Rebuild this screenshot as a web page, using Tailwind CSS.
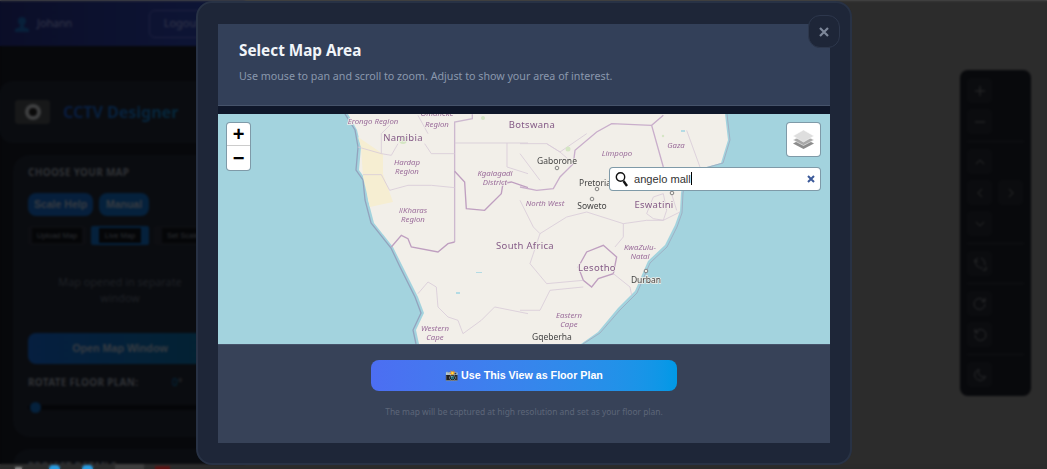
<!DOCTYPE html>
<html lang="en">
<head>
    <meta charset="UTF-8">
    <meta name="viewport" content="width=device-width, initial-scale=1.0">
    <title>CCTV Designer</title>
    <script src="https://cdn.jsdelivr.net/npm/@tailwindcss/browser@4"></script>
</head>
<body class="relative h-[469px] w-[1047px] overflow-hidden bg-[#2c2c2c] font-['Noto_Sans',sans-serif]">

    <!-- Page behind the modal -->
    <div class="flex h-full flex-col border-t border-[#4a4a4a]">
        <div class="flex min-h-0 flex-1 justify-between">
            <!-- Sidebar -->
            <aside class="flex h-[463px] w-[245px] flex-col overflow-hidden bg-[#07080b]">
                <div class="flex h-[45px] shrink-0 items-center bg-gradient-to-r from-[#0b0e28] to-[#0e1638] pl-[15px]">
                    <svg class="h-[16px] w-[14px]" viewBox="0 0 14 16" fill="#08203a"><circle cx="7" cy="5" r="4"/><path d="M5 8h4v3l5 2v3H0v-3l5-2z"/></svg>
                    <span class="ml-[8px] w-[35px] text-[10.7px] text-[#33364a]">Johann</span>
                    <div class="ml-[77px] flex h-[28px] w-[66px] items-center justify-center rounded-md border border-[#1e2140] text-[11px] text-[#33364a]">Logout</div>
                </div>

                <div class="mt-[35px] flex h-[62px] shrink-0 items-center rounded-xl bg-[#0a0c10] pl-[15px]">
                    <div class="flex h-[24px] w-[35px] items-center justify-center rounded-[3px] bg-[#171819]">
                        <div class="flex h-[16px] w-[16px] items-center justify-center rounded-full bg-[#3e3f40]">
                            <div class="h-[8px] w-[8px] rounded-full bg-[#0a0a0a]"></div>
                        </div>
                    </div>
                    <h1 class="ml-[13px] bg-gradient-to-r from-[#091c40] to-[#05283c] bg-clip-text text-[16px] font-bold text-transparent">CCTV Designer</h1>
                </div>

                <section class="mt-[12px] ml-[13px] h-[282px] w-[214px] shrink-0 rounded-2xl bg-[#0a0c10] px-[15px] pt-[10px]">
                    <h2 class="text-[10px] font-bold tracking-[0.3px] text-[#303236]">CHOOSE YOUR MAP</h2>
                    <div class="mt-[13px] flex gap-[6px] font-['Liberation_Sans',sans-serif] text-[10.5px] font-bold text-[#383c42]">
                        <div class="flex h-[23px] w-[65px] items-center justify-center rounded-lg bg-[#061f3c]">Scale Help</div>
                        <div class="flex h-[23px] w-[50px] items-center justify-center rounded-lg bg-[#05213c]">Manual</div>
                    </div>
                    <div class="mt-[10px] flex gap-[5px] font-['Liberation_Sans',sans-serif] text-[7.5px] text-[#2d3034]">
                        <div class="flex h-[19px] w-[58px] items-center justify-center rounded-[2px] bg-[#0d0e12]"><span class="bg-[#050608] px-[5px] py-[2px]">Upload Map</span></div>
                        <div class="flex h-[19px] w-[58px] items-center justify-center rounded-[2px] bg-[#05213c]"><span class="bg-[#050608] px-[6px] py-[2px]">Live Map</span></div>
                        <div class="flex h-[19px] w-[58px] items-center justify-center rounded-[2px] bg-[#0d0e12]"><span class="bg-[#050608] px-[5px] py-[2px]">Set Scale</span></div>
                    </div>
                    <p class="mt-[29px] text-center text-[10.8px] leading-[16px] text-[#1f2126]">Map opened in separate<br>window</p>
                    <div class="mt-[27px] flex h-[31px] w-[184px] items-center justify-center rounded-lg bg-gradient-to-r from-[#061f40] to-[#032232] font-['Liberation_Sans',sans-serif] text-[10.7px] font-bold text-[#383c42]">Open Map Window</div>
                    <div class="mt-[11px] flex items-center text-[10px] font-bold tracking-[0.3px] whitespace-nowrap text-[#303236]">
                        <span class="w-[109px]">ROTATE FLOOR PLAN:</span>
                        <span class="ml-[35px] font-normal text-[#04283e]">0<span class="text-[#303236]">°</span></span>
                    </div>
                    <div class="relative mt-[15px] h-[5px] w-[184px] rounded bg-[#050608]">
                        <div class="absolute top-[-3px] left-[2px] h-[11px] w-[11px] rounded-full bg-[#05213c]"></div>
                    </div>
                </section>

                <section class="mt-[12px] ml-[13px] h-[40px] w-[214px] shrink-0 rounded-2xl bg-[#0a0c10] px-[15px] pt-[10px]">
                    <h2 class="text-[10px] font-bold tracking-[0.3px] text-[#303236]">PROJECT DETAILS</h2>
                </section>
            </aside>

            <!-- Canvas toolbar -->
            <div class="mt-[69px] mr-[16px] flex h-[326px] w-[71px] flex-col items-start rounded-lg bg-[#08090c] px-[7px] pt-[8px] text-[#2a2b2d]">
                <button class="flex h-[25px] w-[25px] items-center justify-center rounded bg-[#0b0c0f]"><svg class="h-[12px] w-[12px]" viewBox="0 0 12 12" fill="none" stroke="currentColor"><path d="M6 1v10M1 6h10"/></svg></button>
                <button class="mt-[6px] flex h-[25px] w-[25px] items-center justify-center rounded bg-[#0b0c0f]"><svg class="h-[12px] w-[12px]" viewBox="0 0 12 12" fill="none" stroke="currentColor"><path d="M1 6h10"/></svg></button>
                <div class="my-[7px] h-px w-[57px] bg-[#101114]"></div>
                <button class="flex h-[25px] w-[25px] items-center justify-center rounded bg-[#0b0c0f]"><svg class="h-[12px] w-[12px]" viewBox="0 0 12 12" fill="none" stroke="currentColor"><path d="M2 8l4-4 4 4"/></svg></button>
                <div class="mt-[6px] flex gap-[6px]">
                    <button class="flex h-[25px] w-[25px] items-center justify-center rounded bg-[#0b0c0f]"><svg class="h-[12px] w-[12px]" viewBox="0 0 12 12" fill="none" stroke="currentColor"><path d="M8 2L4 6l4 4"/></svg></button>
                    <button class="flex h-[25px] w-[25px] items-center justify-center rounded bg-[#0b0c0f]"><svg class="h-[12px] w-[12px]" viewBox="0 0 12 12" fill="none" stroke="currentColor"><path d="M4 2l4 4-4 4"/></svg></button>
                </div>
                <button class="mt-[6px] flex h-[25px] w-[25px] items-center justify-center rounded bg-[#0b0c0f]"><svg class="h-[12px] w-[12px]" viewBox="0 0 12 12" fill="none" stroke="currentColor"><path d="M2 4l4 4 4-4"/></svg></button>
                <div class="my-[7px] h-px w-[57px] bg-[#101114]"></div>
                <button class="flex h-[25px] w-[25px] items-center justify-center rounded bg-[#0b0c0f]"><svg class="h-[14px] w-[14px]" viewBox="0 0 14 14" fill="none" stroke="currentColor"><path d="M5 1L1.500 3.500L5 5M2 3.500C2 8 5 11 9.500 11M8 1C10.500 2 12 4.500 12 8M13 13V9.500M13 13H9.500"/></svg></button>
                <div class="my-[7px] h-px w-[57px] bg-[#101114]"></div>
                <button class="flex h-[25px] w-[25px] items-center justify-center rounded bg-[#0b0c0f]"><svg class="h-[14px] w-[14px]" viewBox="0 0 14 14" fill="none" stroke="currentColor"><path d="M12 7a5.500 5.500 0 1 1-2-4.300L12 4.500M12 1v3.500H8.500"/></svg></button>
                <button class="mt-[6px] flex h-[25px] w-[25px] items-center justify-center rounded bg-[#0b0c0f]"><svg class="h-[14px] w-[14px]" viewBox="0 0 14 14" fill="none" stroke="currentColor"><path d="M2 7a5.500 5.500 0 1 0 2-4.300L2 4.500M2 1v3.500h3.500"/></svg></button>
                <div class="my-[7px] h-px w-[57px] bg-[#101114]"></div>
                <button class="flex h-[25px] w-[25px] items-center justify-center rounded bg-[#0b0c0f]"><svg class="h-[14px] w-[14px]" viewBox="0 0 14 14" fill="none" stroke="currentColor"><path d="M6 1.500a5.500 5.500 0 1 0 6.500 7A5 5 0 0 1 6 1.500z"/></svg></button>
            </div>
        </div>
        <!-- OS taskbar strip -->
        <div class="flex h-[5px] shrink-0 items-start overflow-hidden bg-[#2b2b2b]">
            <div class="mt-[3px] ml-[15px] h-[2px] w-[7px] bg-[#8a8a8a]"></div>
            <div class="mt-[1px] ml-[27px] h-[8px] w-[11px] rounded-full bg-[#2a9be0]"></div>
            <div class="mt-[1px] ml-[22px] h-[8px] w-[11px] rounded-full bg-[#2a9be0]"></div>
            <div class="ml-[22px] h-[5px] w-[29px] bg-[#3e3e3e]"></div>
            <div class="mt-[2px] ml-[11px] h-[3px] w-[15px] bg-[#5a1414]"></div>
        </div>
    </div>

    <!-- Modal backdrop -->
    <div class="absolute inset-0 backdrop-blur-[1px]">
        <div class="absolute top-[1px] left-[196px] flex h-[464px] w-[656px] flex-col rounded-2xl border-2 border-[#283245] bg-[#1e2638] px-[20px] pt-[21px]">
            <button class="absolute top-[12px] right-[10px] flex h-[33px] w-[32px] items-center justify-center rounded-xl border border-[#2d374c] bg-[#1e2638]">
                <svg class="h-[10px] w-[10px]" viewBox="0 0 10 10" stroke="#7d8799" stroke-width="2.200"><path d="M1 1l8 8M9 1l-8 8"/></svg>
            </button>

            <!-- Modal header -->
            <div class="h-[82px] shrink-0 border-b border-[#46536a] bg-[#334059] pt-[16px] pl-[21px]">
                <h2 class="text-[15.3px] leading-[21px] font-bold text-[#f1f5f9]">Select Map Area</h2>
                <p class="mt-[7px] text-[10.7px] leading-[16px] text-[#8a98ad]">Use mouse to pan and scroll to zoom. Adjust to show your area of interest.</p>
            </div>
            <div class="h-[8px] shrink-0 bg-[#0f172a]"></div>

            <!-- Map -->
            <div class="relative h-[230px] w-[612px] shrink-0 overflow-hidden bg-[#a3d3de]">
                <svg class="absolute inset-0 blur-[0.35px]" width="612" height="230" viewBox="0 0 612 230" font-family="Noto Sans">
                    <path fill="#f2efe9" d="M130 0L139 16L143 33L141 56L148 66L150 86L156 109L175 133L185 153L200 183L206 199L198 216L201 230H363L380 218L400 194L417 177L430 147L447 131L457 111L462 97L463 79L467 59L503 49L510 26L507 0z"/>
                    <path fill="none" stroke="#93a3bd" stroke-width="1.300" d="M127 0L137 16L140 33L138 56L145 66L147 86L153 109L173 134L182 153L197 183L203 199L195 216L198 230"/>
                    <path fill="none" stroke="#9fb0c4" stroke-width="1" d="M365 230L382 219L402 196L419 179L432 149L449 133L459 113L464 99L465 79L469 59L505 49L512 26L509 0"/>
                    <path fill="#f6eed2" d="M140 23L165 40L165 60L175 88L152 93L145 63L143 33z"/>
                    <g transform="translate(0,-3.670) scale(.3333)" fill="none" stroke="#d9cbd9" stroke-width="2.500">
                        <path stroke-width="4" stroke="#cdb9cf" d="M763 12V25L710 35V395"/>
                        <path stroke-width="4" stroke="#bf9fc0" d="M520 410L550 375L570 385L580 410L660 425L690 400L710 395"/>
                        <path stroke-width="4" stroke="#bf9fc0" d="M710 183L740 215L745 295L800 300L850 250L855 220L880 215L930 232"/>
                        <path d="M710 98H930M867 98V170L930 190M420 110L490 130V70L520 40M435 193H490L515 240L570 225L640 225L710 232M490 130L520 135L540 100M620 100L640 130H710M600 15L630 70"/>
                        <path d="M600 550L630 515L655 530L660 590L690 620L720 630L735 670L790 630L830 590L930 610"/>
                    </g>
                    <g transform="translate(302,-3.670) scale(.3333)" fill="none" stroke="#d9cbd9" stroke-width="2.500">
                        <path stroke-width="4" stroke="#c9aecb" d="M0 230L50 240L100 235L120 200L160 160L165 120L230 65L275 40L395 45L430 15M395 45L430 170"/>
                        <path stroke-width="4" stroke="#bf9fc0" d="M250 405L290 440L280 490L235 505L215 530L190 510L175 470L200 425z"/>
                        <path d="M0 100H80L120 125L200 70M80 100L120 125L160 160M30 460L60 370L140 320L200 305L310 340L310 380L285 410M30 460L80 520L190 510M190 530L90 540L60 600H0M280 490L330 530L335 555M310 340L380 330H430L480 305M380 310L400 260L430 250L440 300L430 330L400 325zM500 60L540 170M430 170L470 300M0 270L40 350L60 370M0 130L60 210"/>
                    </g>
                    <g fill="#d5e6c4">
                        <circle cx="185" cy="26" r="4"/><circle cx="265" cy="4" r="2"/><circle cx="350" cy="35" r="2.500"/><circle cx="445" cy="22" r="1.200"/>
                    </g>
                    <g fill="#b4dbe4">
                        <rect x="463" y="16" width="4" height="2"/><rect x="258" y="158" width="6" height="1"/><rect x="238" y="178" width="4" height="2"/>
                    </g>
                    <g fill="#f2efe9" stroke="#777" stroke-width=".9">
                        <circle cx="339" cy="54" r="1.800"/><circle cx="379" cy="75" r="1.800"/><circle cx="374" cy="85" r="1.800"/><circle cx="454" cy="79" r="1.800"/><circle cx="428" cy="157" r="1.800"/>
                    </g>
                    <g text-anchor="middle" stroke="#f2efe9" stroke-width="1.500" paint-order="stroke">
                        <g fill="#9a6c9a" font-size="7.800" font-style="italic">
                            <text x="155" y="10">Erongo Region</text>
                            <text x="219" y="2">Omaheke</text><text x="219" y="13">Region</text>
                            <text x="189" y="51">Hardap</text><text x="189" y="60">Region</text>
                            <text x="195" y="99">ǁKharas</text><text x="195" y="108">Region</text>
                            <text x="277" y="62">Kgalagadi</text><text x="277" y="71">District</text>
                            <text x="217" y="217">Western</text><text x="217" y="226">Cape</text>
                            <text x="399" y="42">Limpopo</text><text x="458" y="34">Gaza</text>
                            <text x="327" y="92">North West</text>
                            <text x="422" y="136">KwaZulu-</text><text x="422" y="145">Natal</text>
                            <text x="351" y="204">Eastern</text><text x="351" y="213">Cape</text>
                        </g>
                        <g fill="#845a86" font-size="9.500" letter-spacing=".3">
                            <text x="185" y="27">Namibia</text>
                            <text x="314" y="14">Botswana</text>
                            <text x="307" y="135">South Africa</text>
                            <text x="436" y="94">Eswatini</text>
                            <text x="379" y="157">Lesotho</text>
                        </g>
                        <g fill="#444" font-size="8.500">
                            <text x="339" y="50">Gaborone</text>
                            <text x="377" y="72">Pretoria</text>
                            <text x="374" y="95">Soweto</text>
                            <text x="428" y="169">Durban</text>
                            <text x="334" y="226">Gqeberha</text>
                        </g>
                    </g>
                </svg>

                <!-- Leaflet zoom -->
                <div class="absolute top-[9px] left-[9px] flex w-[23px] flex-col rounded-[3px] bg-white font-['Liberation_Sans',sans-serif] shadow-[0_0_0_1px_#7f9aa8]">
                    <div class="flex h-[23px] items-center justify-center border-b border-[#ccc] text-[20px] leading-none font-bold text-black">+</div>
                    <div class="flex h-[24px] items-center justify-center text-[20px] leading-none font-bold text-black">−</div>
                </div>

                <!-- Layers -->
                <div class="absolute top-[9px] right-[10px] flex h-[33px] w-[33px] items-center justify-center rounded-[3px] bg-white shadow-[0_0_0_1px_#7f9aa8]">
                    <svg class="h-[19px] w-[21px]" viewBox="0 0 21 19">
                        <path fill="#8c8c8c" d="M10.500 8L21 13.500L10.500 19L0 13.500z"/>
                        <path fill="#a8a8a8" stroke="#fff" stroke-width=".5" d="M10.500 4.500L21 10L10.500 15.500L0 10z"/>
                        <path fill="#dedede" stroke="#fff" stroke-width=".5" d="M10.500 0L21 6L10.500 12L0 6z"/>
                    </svg>
                </div>

                <!-- Search -->
                <div class="absolute top-[54px] right-[10px] flex h-[22px] w-[210px] items-center rounded-[3px] bg-white pr-[5px] pl-[5px] font-['Liberation_Sans',sans-serif] shadow-[0_0_0_1px_#7f9aa8]">
                    <svg class="h-[17px] w-[14px]" viewBox="0 0 14 17" fill="none" stroke="#111"><circle cx="5.500" cy="6" r="4.200" stroke-width="1.400"/><path d="M8.500 10l3.500 5" stroke-width="2.400"/></svg>
                    <span class="ml-[5px] flex-1 text-[11.1px] text-[#333]">angelo mall<span class="ml-[0.5px] inline-block h-[13px] w-px translate-y-[2px] bg-black"></span></span>
                    <svg class="h-[8px] w-[8px]" viewBox="0 0 8 8" stroke="#3c5a9a" stroke-width="2"><path d="M1 1l6 6M7 1L1 7"/></svg>
                </div>
            </div>

            <!-- Modal footer -->
            <div class="flex h-[99px] shrink-0 flex-col items-center border-t border-[#46536a] bg-[#374258] pt-[15px]">
                <button class="flex h-[31px] w-[306px] items-center justify-center rounded-lg bg-gradient-to-r from-[#4c6ef2] to-[#0099e6] font-['Liberation_Sans',sans-serif] text-[10.7px] font-bold text-white">📸 Use This View as Floor Plan</button>
                <p class="mt-[15px] text-[8.45px] text-[#5d6679]">The map will be captured at high resolution and set as your floor plan.</p>
            </div>
        </div>
    </div>

</body>
</html>
